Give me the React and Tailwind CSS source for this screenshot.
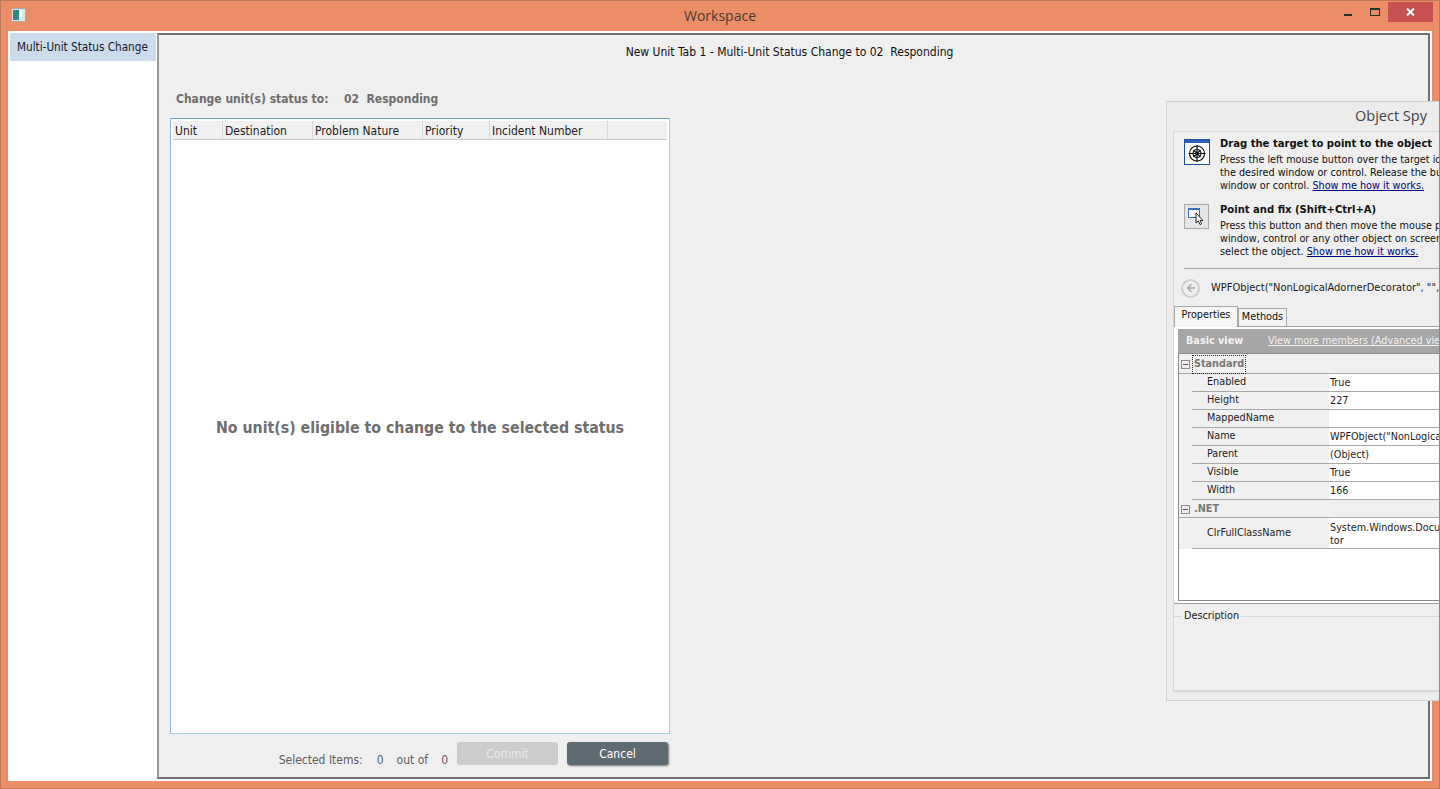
import { ArrowLeft } from 'lucide-react'

const COLUMNS = [
  { label: 'Unit', width: 'w-[50px]' },
  { label: 'Destination', width: 'w-[90px]' },
  { label: 'Problem Nature', width: 'w-[110px]' },
  { label: 'Priority', width: 'w-[67px]' },
  { label: 'Incident Number', width: 'w-[118px]' },
]

const STANDARD = [
  ['Enabled', 'True'],
  ['Height', '227'],
  ['MappedName', ''],
  ['Name', 'WPFObject("NonLogicalAdornerDecorator", "", 1)'],
  ['Parent', '(Object)'],
  ['Visible', 'True'],
  ['Width', '166'],
]

function TargetIcon() {
  return (
    <svg width="26" height="26" viewBox="0 0 26 26" className="shrink-0">
      <rect x="0.5" y="0.5" width="25" height="25" fill="#fff" stroke="#1c4f9c" />
      <rect x="1" y="1" width="24" height="3" fill="#2a63b8" />
      <g fill="none" stroke="#111" strokeWidth="1.2">
        <circle cx="13" cy="14.5" r="7.5" />
        <circle cx="13" cy="14.5" r="4" />
        <path d="M13 6v17M4.5 14.5h17M9.5 11l7 7M16.5 11l-7 7" />
      </g>
    </svg>
  )
}

function PointIcon() {
  return (
    <div className="w-[25px] h-[25px] shrink-0 border border-[#a8a8a8] bg-[#e6e6e6] flex items-center justify-center">
      <svg width="17" height="18" viewBox="0 0 17 18">
        <rect x="0.5" y="0.5" width="11" height="9" fill="#fff" stroke="#3a6fc0" />
        <rect x="1" y="0" width="10" height="2" fill="#3a6fc0" />
        <path d="M8 5v10l2.3-2 1.7 3.6 1.6-.8-1.7-3.4h3z" fill="#fff" stroke="#111" strokeWidth="0.9" />
      </svg>
    </div>
  )
}

function Expander() {
  return (
    <span className="w-[9px] h-[9px] border border-[#8c8c8c] flex items-center justify-center shrink-0">
      <span className="w-[5px] h-px bg-[#555]" />
    </span>
  )
}

function PropertyRow({ name, value, tall }) {
  return (
    <div className={`flex border-b border-[#a9a9a9] ${tall ? 'h-[31px]' : 'h-[18px]'}`}>
      <div className="w-[13px] shrink-0 bg-[#f0f0f0] -mb-px" />
      <div className="w-[137px] shrink-0 pl-[15px] flex items-center bg-[#f0f0f0] text-[#1c1c1c]">{name}</div>
      <div className={`flex-1 bg-white pl-px whitespace-pre leading-[13px] text-[#1c1c1c] ${tall ? 'pt-[3px]' : 'flex items-center'}`}>{value}</div>
    </div>
  )
}

function GroupRow({ label, focused, first }) {
  return (
    <div className={`${first ? 'h-[20px] pt-[2px]' : 'h-[18px] pt-[1px]'} flex items-center gap-[3px] bg-[#f0f0f0] border-b border-[#a9a9a9] pl-[2px]`}>
      <Expander />
      <span className={`font-bold text-[#777] px-px ${focused ? 'outline-1 outline-dotted outline-[#333]' : ''}`}>{label}</span>
    </div>
  )
}

function ObjectSpy() {
  return (
    <div className="absolute left-[1165px] top-[100px] w-[450px] h-[600px] bg-[#ececec] border border-[#d2d2d2] pt-[6px] px-[6px] pb-[8px] flex flex-col text-[10.75px] text-[#111]">
      <div className="h-[23px] text-center text-[14.5px] leading-[16px] text-[#444] font-['Open_Sans',sans-serif]">Object Spy</div>
      <div className="flex-1 border border-[#d8d8d8] bg-[#efefef] flex flex-col min-h-0">
        <div className="pt-[7px] pl-[10px] pr-[6px]">
          <div className="flex gap-[10px] h-[65px]">
            <TargetIcon />
            <div className="leading-[13px] whitespace-nowrap -mt-[2px]">
              <div className="font-bold text-[11.15px] text-[#111] mb-[3px]">Drag the target to point to the object</div>
              <div>Press the left mouse button over the target icon, drag the mouse pointer over</div>
              <div>the desired window or control. Release the button to select the</div>
              <div>window or control. <span className="underline text-[#000080]">Show me how it works.</span></div>
            </div>
          </div>
          <div className="flex gap-[11px] h-[64px]">
            <PointIcon />
            <div className="leading-[13px] whitespace-nowrap -mt-px">
              <div className="font-bold text-[11.15px] text-[#111] mb-[3px]">Point and fix (Shift+Ctrl+A)</div>
              <div>Press this button and then move the mouse pointer over the desired</div>
              <div>window, control or any other object on screen and press Shift+Ctrl+A to</div>
              <div>select the object. <span className="underline text-[#000080]">Show me how it works.</span></div>
            </div>
          </div>
          <div className="border-t border-[#a8a8a8] h-[39px] flex items-center gap-[11px]">
            <span className="w-[19px] h-[19px] -ml-[3px] rounded-full border-2 border-[#cfcfcf] flex items-center justify-center text-[#a8a8a8] shrink-0">
              <ArrowLeft size={12} strokeWidth={3} />
            </span>
            <span className="whitespace-nowrap text-[11px] text-[#1a1a1a]">WPFObject("NonLogicalAdornerDecorator", "", 1)</span>
          </div>
        </div>
        <div className="flex items-end h-[21px] -mt-[2px] pl-0">
          <div className="h-[21px] w-[64px] bg-[#f6f6f6] border border-b-0 border-[#a8a8a8] text-center leading-[15px] z-10 -mb-px">Properties</div>
          <div className="h-[18px] w-[49px] bg-[#f2f2f2] border border-b-0 border-[#a8a8a8] text-center leading-[16px]">Methods</div>
        </div>
        <div className="h-[278px] border-y border-[#a0a0a0] bg-white pl-[4px] pt-[2px] pb-[2px] shrink-0">
          <div className="h-full border border-t-0 border-[#8a8a8a] flex flex-col">
            <div className="h-[25px] shrink-0 -mx-px bg-[#a6a6a6] border-b border-[#8c8c8c] flex items-center pl-[8px] text-[#f2f2f2]">
              <span className="w-[82px] font-bold">Basic view</span>
              <span className="underline whitespace-nowrap">View more members (Advanced view)</span>
            </div>
            <GroupRow label="Standard" focused first />
            {STANDARD.map(([name, value]) => <PropertyRow key={name} name={name} value={value} />)}
            <GroupRow label=".NET" />
            <PropertyRow name="ClrFullClassName" value={'System.Windows.Documents.NonLogicalAdornerDecora\ntor'} tall />
          </div>
        </div>
        <div className="flex-1 pt-[5px] flex flex-col">
          <div className="flex-1 border-b border-[#dcdcdc]">
            <div className="flex items-center gap-[2px] leading-[14px] text-[#222]">
              <span className="w-[8px] h-px bg-[#d8d8d8]" />
              <span>Description</span>
              <span className="flex-1 h-px bg-[#d8d8d8]" />
            </div>
          </div>
        </div>
      </div>
    </div>
  )
}

export default function App() {
  return (
    <div className="relative h-screen w-screen overflow-hidden bg-[#eb8d67] border border-[#c0775a] font-['DejaVu_Sans_Condensed','Liberation_Sans',sans-serif] text-[12px] flex flex-col">
      {/* title bar */}
      <div className="h-[30px] shrink-0 flex items-start justify-end relative">
        <div className="absolute left-[10px] top-[7px] w-[15px] h-[14px] bg-[#dfe6e6] border border-[#aaa] flex p-px gap-px">
          <span className="w-[6px] bg-[#2f8a86]" />
          <span className="w-[2px] h-[7px] bg-white" />
        </div>
        <div className="absolute inset-x-0 top-0 text-center text-[14px] leading-[30px] text-[#4a3a33] font-['Open_Sans',sans-serif]">Workspace</div>
        <div className="relative flex items-center h-[21px] mr-[6px]">
          <div className="w-[28px] flex justify-center"><span className="w-[8px] h-[2px] bg-[#2b2b2b] mt-[6px]" /></div>
          <div className="w-[26px] flex justify-center"><span className="w-[10px] h-[8px] border border-t-2 border-[#2b2b2b]" /></div>
          <div className="w-[45px] h-[20px] bg-[#c75050] text-white flex items-center justify-center">
            <svg width="9" height="8" viewBox="0 0 9 8"><path d="M1 0.5l7 7M8 0.5l-7 7" stroke="#fff" strokeWidth="2" /></svg>
          </div>
        </div>
      </div>

      <div className="flex-1 min-h-0 flex pl-[7px] pr-[7px] pb-[7px]">
        {/* left nav */}
        <div className="w-[148px] shrink-0 bg-white pl-[2px] pt-[2px]">
          <div className="h-[28px] bg-[#cddced] pl-[7px] text-[11.65px] leading-[29px] text-[#111a2c] whitespace-nowrap">Multi-Unit Status Change</div>
        </div>

        {/* main */}
        <div className="flex-1 bg-white pt-[2px] pr-[2px] pb-[2px] pl-px min-w-0">
          <div className="h-full border-2 border-[#6f6f6f] border-l-[#9a9a9a] bg-[#efefef] flex flex-col pl-[11px]">
            <div className="h-[33px] pt-[10px] -ml-[11px] pr-[8px] text-center text-[#111] leading-[14px]">New Unit Tab 1 - Multi-Unit Status Change to 02&nbsp;&nbsp;Responding</div>
            <div className="mt-[23px] h-[27px] pl-[6px] flex font-bold text-[#6e6e6e] text-[12px] leading-[16px] whitespace-pre">
              <span className="w-[168px]">Change unit(s) status to:</span>
              <span>02  Responding</span>
            </div>
            <div className="w-[500px] h-[616px] border border-[#a9cfe4] border-t-[#6ea0c4] border-l-[#8db9d6] bg-white p-[2px] flex flex-col">
              <div className="h-[19px] shrink-0 flex bg-[#f0f0f0] border-b border-[#c8c8c8] text-[#1c1c1c]">
                {COLUMNS.map((col) => (
                  <div key={col.label} className={`${col.width} shrink-0 pl-[2px] leading-[20px] border-r border-[#d8d8d8] whitespace-nowrap`}>{col.label}</div>
                ))}
              </div>
              <div className="flex-1 flex items-center justify-center text-[15.75px] font-bold text-[#6e6e6e] pb-[16px]">
                No unit(s) eligible to change to the selected status
              </div>
            </div>
            <div className="w-[500px] h-[24px] mt-[8px] flex items-start justify-end text-[#5e5e5e]">
              <div className="mt-[11px] leading-[14px] flex whitespace-nowrap">
                <span>Selected Items:</span>
                <span className="ml-[14px]">0</span>
                <span className="ml-[13px]">out of</span>
                <span className="ml-[13px]">0</span>
              </div>
              <div className="ml-[9px] w-[101px] h-[23px] rounded-[3px] bg-[#cccccc] text-[#e9e9e9] text-center leading-[24px]">Commit</div>
              <div className="ml-[9px] mr-[2px] w-[101px] h-[23px] rounded-[3px] bg-[#5f6b73] text-white text-center leading-[24px] shadow-[1px_1px_2px_rgba(0,0,0,0.5)]">Cancel</div>
            </div>
          </div>
        </div>
      </div>

      <ObjectSpy />
    </div>
  )
}
